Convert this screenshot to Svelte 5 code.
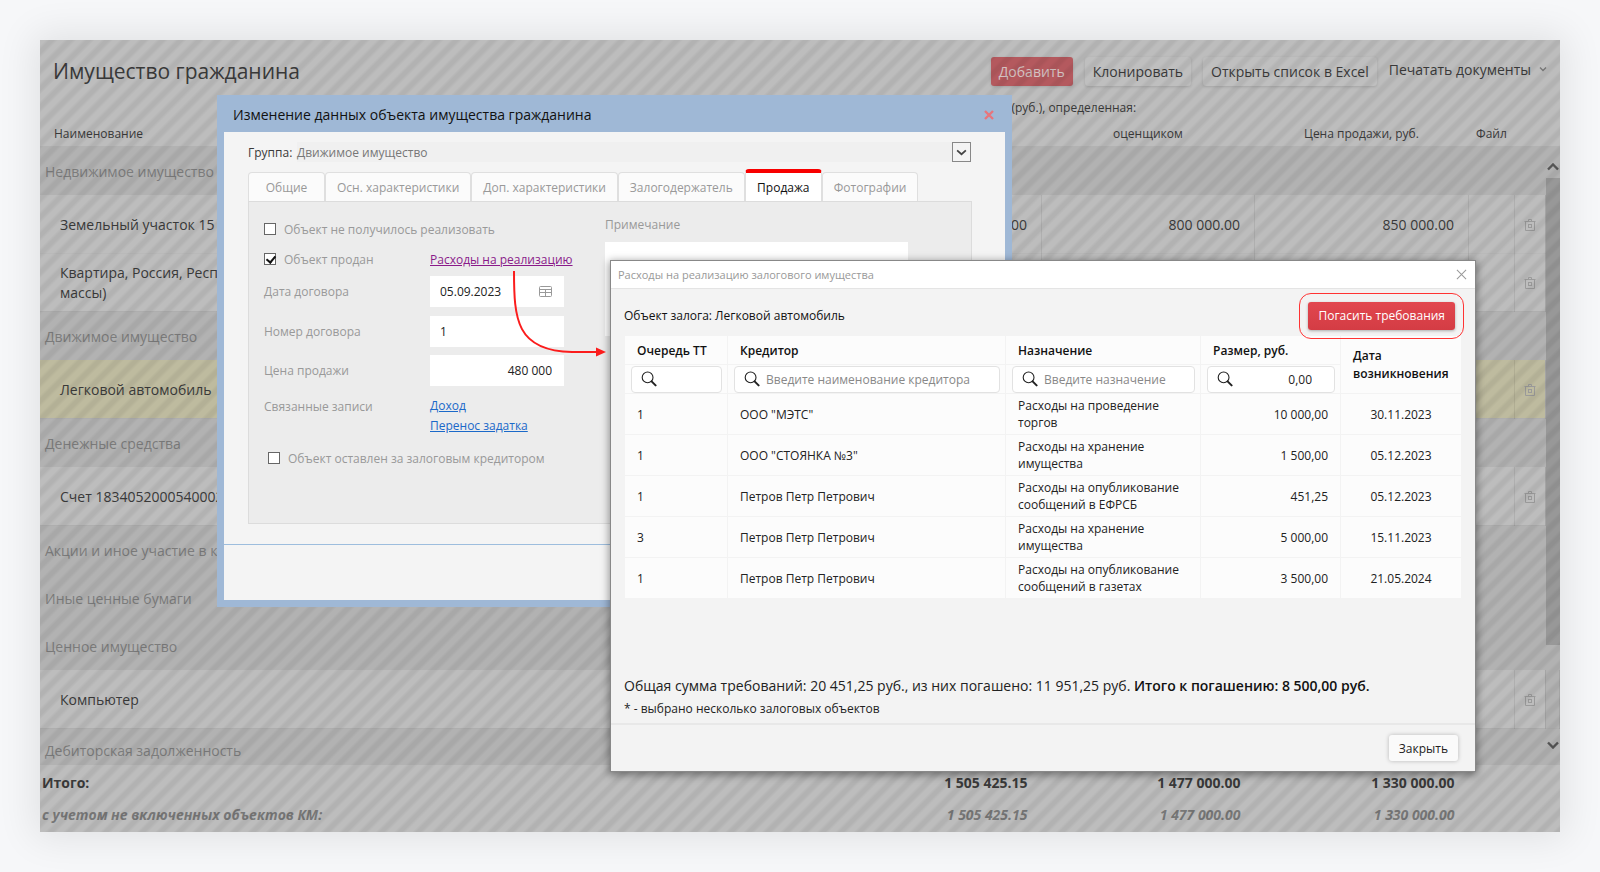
<script>
  // Список имущества под затемнением и два окна поверх него:
  // карточка объекта и расходы на реализацию.
  const rows = [
    { group: 'Недвижимое имущество' },
    { name: ['Земельный участок 15'], cost: '00', appraised: '800 000.00', price: '850 000.00' },
    { name: ['Квартира, Россия, Респ', 'массы)'] },
    { group: 'Движимое имущество' },
    { name: ['Легковой автомобиль'], selected: true },
    { group: 'Денежные средства' },
    { name: ['Счет 1834052000540002'] },
    { group: 'Акции и иное участие в к', empty: true },
    { group: 'Иные ценные бумаги', empty: true },
    { group: 'Ценное имущество' },
    { name: ['Компьютер'] },
    { group: 'Дебиторская задолженность', last: true }
  ];

  const tabs = ['Общие', 'Осн. характеристики', 'Доп. характеристики', 'Залогодержатель', 'Продажа', 'Фотографии'];
  let tab = $state('Продажа');

  let failed = $state(false);
  let sold = $state(true);
  let leftToCreditor = $state(false);

  const expenses = [
    { order: 1, creditor: 'ООО "МЭТС"', purpose: 'Расходы на проведение торгов', sum: '10 000,00', date: '30.11.2023' },
    { order: 1, creditor: 'ООО "СТОЯНКА №3"', purpose: 'Расходы на хранение имущества', sum: '1 500,00', date: '05.12.2023' },
    { order: 1, creditor: 'Петров Петр Петрович', purpose: 'Расходы на опубликование сообщений в ЕФРСБ', sum: '451,25', date: '05.12.2023' },
    { order: 3, creditor: 'Петров Петр Петрович', purpose: 'Расходы на хранение имущества', sum: '5 000,00', date: '15.11.2023' },
    { order: 1, creditor: 'Петров Петр Петрович', purpose: 'Расходы на опубликование сообщений в газетах', sum: '3 500,00', date: '21.05.2024' }
  ];
</script>

{#snippet lens()}
  <svg class="lens" viewBox="0 0 16 16" aria-hidden="true">
    <circle cx="6.6" cy="6.4" r="5.4" fill="none" stroke="#222" stroke-width="1.1" />
    <path d="M10.6 10.4 L14.6 14.4" stroke="#222" stroke-width="2" stroke-linecap="round" />
  </svg>
{/snippet}

<main class="page">
  <section class="panel">
    <header class="toolbar">
      <h1>Имущество гражданина</h1>
      <button class="btn add">Добавить</button>
      <button class="btn">Клонировать</button>
      <button class="btn">Открыть список в Excel</button>
      <button class="print">
        Печатать документы
        <svg viewBox="0 0 8 6" aria-hidden="true"><path d="M1 1.5 L4 4.5 L7 1.5" fill="none" stroke="#777" stroke-width="1.4" /></svg>
      </button>
    </header>

    <div class="list">
      <table class="assets">
        <colgroup>
          <col />
          <col class="c-cost" />
          <col class="c-appraised" />
          <col class="c-price" />
          <col class="c-file" />
          <col class="c-del" />
          <col class="c-scroll" />
        </colgroup>
        <thead>
          <tr>
            <th colspan="2"></th>
            <th class="over" colspan="5"><span>(руб.), определенная:</span></th>
          </tr>
          <tr>
            <th class="left">Наименование</th>
            <th></th>
            <th>оценщиком</th>
            <th>Цена продажи, руб.</th>
            <th class="file">Файл</th>
            <th></th>
            <th></th>
          </tr>
        </thead>
        <tbody>
          {#each rows as r}
            {#if r.group}
              <tr class="group" class:empty={r.empty} class:last={r.last}>
                <td colspan="7">{r.group}</td>
              </tr>
            {:else}
              <tr class="item" class:selected={r.selected}>
                <td class="name">{#each r.name as line}<div>{line}</div>{/each}</td>
                <td class="num">{r.cost ?? ''}</td>
                <td class="num">{r.appraised ?? ''}</td>
                <td class="num">{r.price ?? ''}</td>
                <td></td>
                <td class="del">
                  <button aria-label="Удалить">
                    <svg viewBox="0 0 12 14" aria-hidden="true">
                      <path d="M0.5 3.5 H11.5 M4.5 3 V1.5 H7.5 V3 M1.5 3.5 V12.5 H10.5 V3.5" />
                      <path d="M4.5 6 V10 M7.5 6 V10 M4.5 6.5 H7.5 M4.5 9.5 H7.5" />
                    </svg>
                  </button>
                </td>
                <td class="gutter"></td>
              </tr>
            {/if}
          {/each}
        </tbody>
        <tfoot>
          <tr class="total">
            <td>Итого:</td>
            <td class="num">1 505 425.15</td>
            <td class="num">1 477 000.00</td>
            <td class="num">1 330 000.00</td>
            <td colspan="3"></td>
          </tr>
          <tr class="total-km">
            <td>с учетом не включенных объектов КМ:</td>
            <td class="num">1 505 425.15</td>
            <td class="num">1 477 000.00</td>
            <td class="num">1 330 000.00</td>
            <td colspan="3"></td>
          </tr>
        </tfoot>
      </table>
      <div class="scrollbar" aria-hidden="true">
        <svg viewBox="0 0 12 8"><path d="M1 6.5 L6 1.5 L11 6.5" /></svg>
        <div class="thumb"></div>
        <svg viewBox="0 0 12 8"><path d="M1 1.5 L6 6.5 L11 1.5" /></svg>
      </div>
    </div>

    <!-- карточка объекта -->
    <div class="card" role="dialog" aria-labelledby="card-title">
      <header class="card-head">
        <h2 id="card-title">Изменение данных объекта имущества гражданина</h2>
        <button aria-label="Закрыть карточку">
          <svg viewBox="0 0 10 10" aria-hidden="true"><path d="M1 1 L9 9 M9 1 L1 9" stroke="#e8757c" stroke-width="2.4" /></svg>
        </button>
      </header>
      <div class="card-body">
        <div class="group-line">
          <span class="cap">Группа:</span>
          <span class="val">Движимое имущество</span>
          <button class="drop" aria-label="Выбрать группу">
            <svg viewBox="0 0 12 8" aria-hidden="true"><path d="M1 1.5 L6 6 L11 1.5" fill="none" stroke="#444" stroke-width="2" /></svg>
          </button>
        </div>

        <div class="tabs" role="tablist">
          {#each tabs as t}
            <button role="tab" aria-selected={t === tab} class:active={t === tab} onclick={() => (tab = t)}>{t}</button>
          {/each}
        </div>

        <div class="sheet">
          <div class="form">
            <label class="check wide"><input type="checkbox" bind:checked={failed} />Объект не получилось реализовать</label>

            <label class="check"><input type="checkbox" bind:checked={sold} />Объект продан</label>
            <a class="visited" href="#expenses">Расходы на реализацию</a>

            <label class="cap" for="f-date">Дата договора</label>
            <div class="field date">
              <input id="f-date" value="05.09.2023" />
              <svg viewBox="0 0 13 11" aria-hidden="true"><path d="M1.5 0.5 H11.5 Q12.5 0.5 12.5 1.5 V9.5 Q12.5 10.5 11.5 10.5 H1.5 Q0.5 10.5 0.5 9.5 V1.5 Q0.5 0.5 1.5 0.5 M0.5 3.5 H12.5 M0.5 6.5 H12.5 M6.5 3.5 V10.5" fill="none" stroke="#999" /></svg>
            </div>

            <label class="cap" for="f-num">Номер договора</label>
            <div class="field"><input id="f-num" value="1" /></div>

            <label class="cap" for="f-price">Цена продажи</label>
            <div class="field price"><input id="f-price" value="480 000" /></div>

            <span class="links-cap">Связанные записи</span>
            <div class="links">
              <a href="#income">Доход</a>
              <a href="#deposit">Перенос задатка</a>
            </div>

            <label class="check wide inset"><input type="checkbox" bind:checked={leftToCreditor} />Объект оставлен за залоговым кредитором</label>
          </div>
          <div class="note">
            <label for="f-note">Примечание</label>
            <textarea id="f-note"></textarea>
          </div>
        </div>
        <div class="card-foot"></div>
      </div>
    </div>

    <!-- расходы на реализацию -->
    <div class="expenses" id="expenses" role="dialog" aria-labelledby="exp-title">
      <header class="exp-head">
        <h2 id="exp-title">Расходы на реализацию залогового имущества</h2>
        <button aria-label="Закрыть окно">
          <svg viewBox="0 0 12 12" aria-hidden="true"><path d="M1 1 L11 11 M11 1 L1 11" stroke="#999" stroke-width="1.1" /></svg>
        </button>
      </header>
      <div class="exp-body">
        <div class="exp-top">
          <span>Объект залога: Легковой автомобиль</span>
          <button class="pay">Погасить требования</button>
        </div>

        <table class="costs">
          <colgroup>
            <col class="k-order" />
            <col />
            <col class="k-purpose" />
            <col class="k-sum" />
            <col class="k-date" />
          </colgroup>
          <thead>
            <tr class="heads">
              <th>Очередь ТТ</th>
              <th>Кредитор</th>
              <th>Назначение</th>
              <th>Размер, руб.</th>
              <th class="date" rowspan="2">Дата возникновения</th>
            </tr>
            <tr class="filters">
              <td><div class="filter">{@render lens()}<input aria-label="Очередь ТТ" /></div></td>
              <td><div class="filter">{@render lens()}<input aria-label="Кредитор" placeholder="Введите наименование кредитора" /></div></td>
              <td><div class="filter">{@render lens()}<input aria-label="Назначение" placeholder="Введите назначение" /></div></td>
              <td><div class="filter sum">{@render lens()}<input aria-label="Размер, руб." value="0,00" /></div></td>
            </tr>
          </thead>
          <tbody>
            {#each expenses as e}
              <tr>
                <td>{e.order}</td>
                <td>{e.creditor}</td>
                <td class="purpose">{e.purpose}</td>
                <td class="sum">{e.sum}</td>
                <td class="date">{e.date}</td>
              </tr>
            {/each}
          </tbody>
        </table>

        <p class="sumline">Общая сумма требований: 20 451,25 руб., из них погашено: 11 951,25 руб. <b>Итого к погашению: 8 500,00 руб.</b></p>
        <p class="remark">* - выбрано несколько залоговых объектов</p>
      </div>
      <footer class="exp-foot"><button>Закрыть</button></footer>
    </div>

    <!-- стрелка от ссылки к окну расходов -->
    <svg class="arrow" viewBox="0 0 100 90" aria-hidden="true">
      <path d="M4 0 C4 48 6 80 62 81 H88" fill="none" stroke="#fb1c1c" stroke-width="2" />
      <path d="M86 76.5 L96 81 L86 85.5 Z" fill="#fb1c1c" />
    </svg>
  </section>
</main>

<style>
  :global(body) { background: #f6f7f9; }
  .page { box-sizing: border-box; min-height: 100vh; padding: 40px; overflow: hidden; font-family: "Open Sans", "Noto Sans", sans-serif; font-size: 14px; color: #3a3a3a; }
  .page * { box-sizing: border-box; }
  button, input, textarea { font: inherit; color: inherit; }
  button { cursor: pointer; border: 0; padding: 0; background: none; }
  h1, h2, p { margin: 0; font-weight: 400; }
  svg { display: block; }

  .panel { position: relative; background: #bdbdbd; box-shadow: 0 0 36px 6px rgba(0, 0, 0, 0.09); }
  /* штриховка затемнения */
  .panel::before { content: ''; position: absolute; inset: 0; pointer-events: none; z-index: 1; background: repeating-linear-gradient(135deg, rgba(0, 0, 0, 0) 0, rgba(0, 0, 0, 0) 4px, rgba(0, 0, 0, 0.06) 7px, rgba(0, 0, 0, 0.06) 10px, rgba(0, 0, 0, 0) 13px); }

  .toolbar { display: flex; align-items: center; height: 54px; padding: 8px 13px 0 13px; }
  .toolbar h1 { flex: 1; font-size: 21px; line-height: 28px; }
  .btn { height: 29px; padding: 0 8px; margin-right: 12px; border-radius: 3px; background: rgba(255, 255, 255, 0.03); box-shadow: 0 1px 3px rgba(0, 0, 0, 0.14); }
  .btn.add { background: #b4595e; color: #d5c4c4; }
  .print { display: flex; align-items: center; gap: 8px; height: 29px; padding-bottom: 4px; }
  .print svg { width: 8px; height: 6px; }

  .list { position: relative; }
  table { border-collapse: collapse; table-layout: fixed; width: 100%; }
  td, th { padding: 0; font-weight: 400; text-align: left; }
  .c-cost, .c-price { width: 214px; }
  .c-appraised { width: 213px; }
  .c-file { width: 46px; }
  .c-del { width: 31px; }
  .c-scroll { width: 14px; }
  .assets th { height: 26px; font-size: 12px; text-align: center; }
  .assets .left { padding-left: 14px; text-align: left; }
  .assets .over { text-align: left; }
  .over span { margin-left: -30px; }
  .group td { height: 49px; padding: 2px 0 0 5px; background: rgba(0, 0, 0, 0.055); color: #7c7c7c; }
  .group.empty td { height: 48px; }
  .group.last td { height: 37px; padding-top: 8px; }
  .item td { height: 58px; padding-top: 2px; border-right: 1px solid rgba(0, 0, 0, 0.07); border-bottom: 1px solid rgba(0, 0, 0, 0.02); line-height: 20px; }
  .item .name { padding-left: 20px; white-space: nowrap; }
  .assets .num { padding-right: 14px; text-align: right; }
  .item.selected td { background: #bebb9f; }
  .item .gutter, .item.selected .gutter { background: rgba(0, 0, 0, 0.055); }
  .del button { display: block; margin: 0 auto; }
  .del svg { width: 12px; height: 14px; fill: none; stroke: #9a9a9a; }
  .total td { height: 35px; font-weight: 700; padding-left: 2px; }
  .total-km td { height: 32px; padding: 0 0 4px 2px; font-weight: 700; font-style: italic; color: #777; }

  .scrollbar { position: absolute; right: 0; top: 52px; bottom: 67px; width: 14px; display: flex; flex-direction: column; align-items: center; padding: 17px 0 16px; }
  .scrollbar svg { width: 12px; height: 8px; fill: none; stroke: #555; stroke-width: 2.4; }
  .thumb { width: 14px; flex: 0 0 467px; margin: 7px 0 auto; background: #989898; }

  .card { position: absolute; z-index: 2; left: 177px; top: 55px; width: 795px; padding: 0 7px 7px; background: #9fb8d6; }
  .card-head { display: flex; align-items: center; justify-content: space-between; height: 37px; padding: 2px 11px 0 9px; color: #111; }
  .card-head h2 { font-size: 14px; }
  .card-head svg { width: 10px; height: 10px; }
  .card-body { background: #f4f4f4; }
  .group-line { display: flex; align-items: center; padding: 10px 34px 0 24px; font-size: 12px; }
  .group-line .cap { width: 49px; }
  .group-line .val { flex: 1; height: 20px; line-height: 21px; background: #f0f0f0; color: #777; }
  .drop { display: grid; place-items: center; width: 19px; height: 20px; border: 1px solid #888; background: #f4f4f4; }
  .drop svg { width: 11px; height: 7px; }

  .tabs { display: flex; align-items: flex-end; height: 39px; padding-left: 24px; }
  .tabs button { height: 29px; min-width: 77px; padding: 0 11px; border: 1px solid #dfdfdf; border-bottom: 0; border-radius: 4px 4px 0 0; background: #fbfbfb; font-size: 12px; color: #999; }
  .tabs .active { height: 32px; border-top: 4px solid #f80000; background: #fff; color: #111; }
  .sheet { display: flex; height: 323px; margin: 0 33px 0 24px; padding: 14px 0 0 15px; border: 1px solid #dcdcdc; background: #ececec; font-size: 12px; color: #999; }
  .form { display: grid; grid-template-columns: 166px 134px; grid-template-rows: 26px 34px 40px 39px 37px 54px 24px; width: 341px; align-items: center; align-content: start; }
  .wide { grid-column: 1 / -1; }
  .check { display: flex; align-items: center; gap: 8px; }
  .check input { appearance: none; position: relative; width: 12px; height: 12px; margin: 0; border: 1px solid #666; background: #fff; }
  .check input:checked::after { content: ''; position: absolute; left: 3px; top: 0; width: 4px; height: 7px; border: solid #111; border-width: 0 2px 2px 0; transform: rotate(40deg); }
  .inset { padding-left: 4px; }
  .visited { color: #8a1a8a; white-space: nowrap; }
  .form .cap { align-self: start; line-height: 32px; }
  .field { display: flex; align-items: center; align-self: start; height: 31px; background: #fff; color: #222; }
  .field input { width: 100%; min-width: 0; padding: 0 10px; border: 0; background: none; }
  .field svg { width: 13px; height: 11px; flex: none; margin-right: 12px; }
  .field.price input { padding-right: 12px; text-align: right; }
  .links-cap { align-self: start; padding-top: 6px; }
  .links { display: flex; flex-direction: column; line-height: 20px; padding-top: 4px; align-self: start; }
  .links a { color: #1b69c9; }
  .note { width: 303px; }
  .note label { display: block; height: 26px; line-height: 18px; }
  .note textarea { display: block; width: 100%; height: 94px; border: 0; resize: none; background: #fff; }
  .card-foot { height: 56px; margin-top: 20px; border-top: 1px solid #9dbddd; }

  .expenses { position: absolute; z-index: 3; left: 571px; top: 221px; width: 864px; background: #f3f3f3; box-shadow: 0 0 0 1px #888, 0 2px 8px 2px rgba(0, 0, 0, 0.4); color: #222; font-size: 12px; }
  .exp-head { display: flex; align-items: center; justify-content: space-between; height: 28px; padding: 0 8px 0 7px; background: #fff; border-bottom: 1px solid #e4e4e4; color: #999; }
  .exp-head h2 { font-size: 11px; }
  .exp-head svg { width: 11px; height: 11px; }
  .exp-body { height: 434px; padding: 7px 13px 0; }
  .exp-top { display: flex; justify-content: space-between; align-items: center; height: 39px; color: #111; }
  .pay { height: 28px; margin-right: 7px; padding: 0 10px; border-radius: 3px; background: linear-gradient(#e2474f, #d43c44); color: #fff; box-shadow: 0 1px 3px rgba(0, 0, 0, 0.3); outline: 1px solid #f33; outline-offset: 8px; }
  .costs { background: #fcfcfc; }
  .costs th, .costs td { padding: 0 12px; border: 1px solid #f3f3f3; }
  .costs tbody td { height: 41px; line-height: 17px; }
  .costs tbody .purpose { padding-right: 8px; }
  .costs tbody .sum { text-align: right; }
  .costs tbody .date { text-align: center; }
  .k-order { width: 103px; }
  .k-purpose { width: 195px; }
  .k-sum { width: 140px; }
  .k-date { width: 121px; }
  .costs .heads th { height: 29px; font-weight: 600; color: #111; }
  .costs .heads .date { padding-right: 0; line-height: 18px; }
  .costs .filters td { height: 29px; padding: 0 5px 0 6px; }
  .filter { display: flex; align-items: center; height: 27px; padding: 0 8px 0 9px; border: 1px solid #e2e2e2; border-radius: 4px; background: #fff; }
  .lens { flex: none; width: 16px; height: 16px; }
  .filter input { width: 100%; min-width: 0; padding: 0 0 0 6px; border: 0; background: none; outline: 0; }
  .filter input::placeholder { color: #888; }
  .filter.sum { padding-right: 22px; }
  .filter.sum input { text-align: right; }
  .sumline { margin-top: 76px; font-size: 14px; line-height: 22px; white-space: nowrap; }
  .sumline b { font-weight: 600; color: #111; }
  .remark { margin-top: 3px; line-height: 18px; }
  .exp-foot { display: flex; justify-content: flex-end; padding: 10px 17px 10px; border-top: 2px solid #e8e8e8; }
  .exp-foot button { height: 26px; padding: 0 10px; border-radius: 3px; background: #fafafa; box-shadow: 0 0 4px rgba(0, 0, 0, 0.25); }

  .arrow { position: absolute; z-index: 4; left: 470px; top: 231px; width: 100px; height: 90px; }
</style>
